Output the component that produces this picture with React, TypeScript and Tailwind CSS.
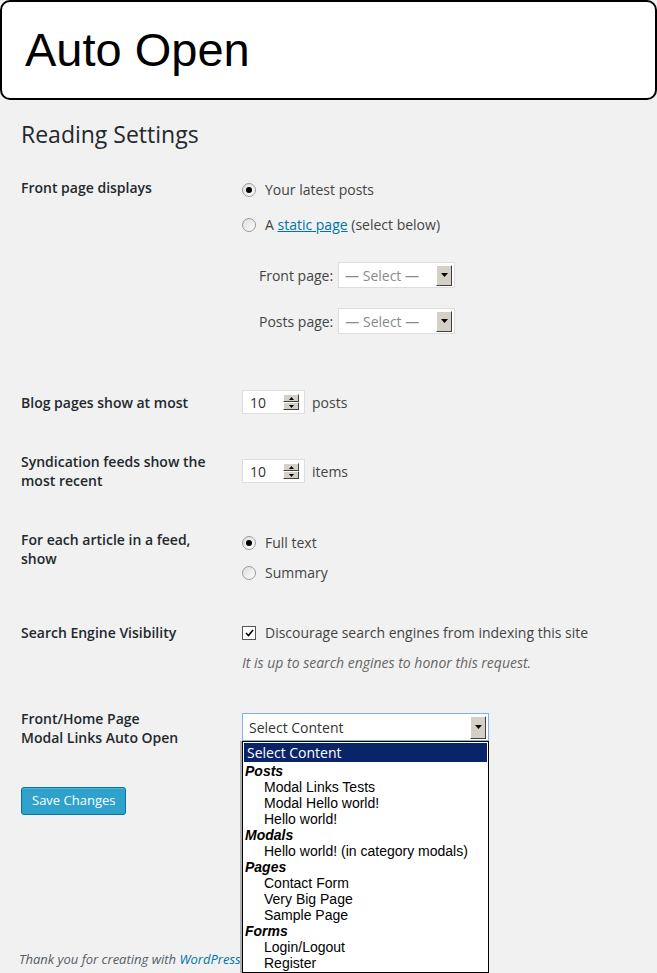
import React from "react";

const wpFont = { fontFamily: '"Open Sans", "Liberation Sans", sans-serif' };

function Radio({ checked }: { checked?: boolean }) {
  return (
    <span className="inline-flex h-[14px] w-[14px] shrink-0 items-center justify-center rounded-full border border-[#9a9a9a] bg-gradient-to-br from-[#dcdcdc] to-white">
      {checked && <span className="h-[6px] w-[6px] rounded-full bg-black" />}
    </span>
  );
}

function DropArrow({ className }: { className?: string }) {
  return (
    <span
      className={
        "flex items-center justify-center border border-t-white border-l-white border-b-[#404040] border-r-[#404040] bg-[#d4d0c8] " +
        (className ?? "")
      }
    >
      <svg width="7" height="4" viewBox="0 0 7 4">
        <path d="M0 0h7L3.5 4z" fill="#000" />
      </svg>
    </span>
  );
}

function SmallSelect() {
  return (
    <div className="flex h-[26px] w-[117px] items-center justify-between border border-[#dddddd] bg-white pl-[6px] pr-[2px]">
      <span className="text-[14px] text-[#8a8a8a]">— Select —</span>
      <DropArrow className="h-[21px] w-[16px]" />
    </div>
  );
}

function Spinner() {
  return (
    <div className="flex h-[24px] w-[63px] items-center justify-between border border-[#dddddd] bg-white pl-[7px] pr-[5px]">
      <span className="text-[14px] text-[#333]">10</span>
      <span className="flex h-[16px] w-[16px] flex-col">
        <span className="flex flex-1 items-center justify-center border border-t-white border-l-white border-b-[#404040] border-r-[#404040] bg-[#d4d0c8]">
          <svg width="5" height="3" viewBox="0 0 5 3">
            <path d="M0 3h5L2.5 0z" fill="#000" />
          </svg>
        </span>
        <span className="flex flex-1 items-center justify-center border border-t-white border-l-white border-b-[#404040] border-r-[#404040] bg-[#d4d0c8]">
          <svg width="5" height="3" viewBox="0 0 5 3">
            <path d="M0 0h5L2.5 3z" fill="#000" />
          </svg>
        </span>
      </span>
    </div>
  );
}

const groups: { name: string; items: string[] }[] = [
  { name: "Posts", items: ["Modal Links Tests", "Modal Hello world!", "Hello world!"] },
  { name: "Modals", items: ["Hello world! (in category modals)"] },
  { name: "Pages", items: ["Contact Form", "Very Big Page", "Sample Page"] },
  { name: "Forms", items: ["Login/Logout", "Register"] },
];

export default function App() {
  return (
    <div className="min-h-[973px] w-full overflow-hidden bg-[#f1f1f1] text-[#444]" style={wpFont}>
      <div className="flex h-[100px] items-center rounded-[10px] border-2 border-black bg-white pl-[23px] pb-[2px]">
        <span className="text-[47px] leading-none text-black" style={{ fontFamily: '"Liberation Sans", Arial, sans-serif' }}>
          Auto Open
        </span>
      </div>

      <div className="pl-[21px]">
        <h1 className="mt-[19px] text-[23px] leading-[30px] text-[#23282d]">Reading Settings</h1>

        {/* Front page displays */}
        <div className="mt-[31px] flex">
          <div className="-mt-[2px] w-[221px] text-[14px] font-semibold leading-[19px] text-[#23282d]">Front page displays</div>
          <div className="flex flex-col text-[14px]">
            <div className="flex h-[19px] items-center gap-[9px]">
              <Radio checked />
              <span>Your latest posts</span>
            </div>
            <div className="mt-[16px] flex h-[19px] items-center gap-[9px]">
              <Radio />
              <span>
                A <span className="text-[#0073aa] underline">static page</span> (select below)
              </span>
            </div>
            <div className="ml-[17px] mt-[28px] flex items-center gap-[5px]">
              <span>Front page:</span>
              <SmallSelect />
            </div>
            <div className="ml-[17px] mt-[20px] flex items-center gap-[5px]">
              <span>Posts page:</span>
              <SmallSelect />
            </div>
          </div>
        </div>

        {/* Blog pages */}
        <div className="mt-[56px] flex items-center">
          <div className="w-[221px] text-[14px] font-semibold leading-[19px] text-[#23282d]">Blog pages show at most</div>
          <Spinner />
          <span className="ml-[7px] text-[14px]">posts</span>
        </div>

        {/* Syndication */}
        <div className="mt-[38px] flex items-start">
          <div className="w-[221px] pr-[10px] text-[14px] font-semibold leading-[19px] text-[#23282d]">
            Syndication feeds show the most recent
          </div>
          <div className="mt-[7px] flex items-center">
            <Spinner />
            <span className="ml-[7px] text-[14px]">items</span>
          </div>
        </div>

        {/* For each article */}
        <div className="mt-[40px] flex items-start">
          <div className="w-[221px] pr-[20px] text-[14px] font-semibold leading-[19px] text-[#23282d]">
            For each article in a feed, show
          </div>
          <div className="mt-[3px] flex flex-col text-[14px]">
            <div className="flex h-[19px] items-center gap-[9px]">
              <Radio checked />
              <span>Full text</span>
            </div>
            <div className="mt-[11px] flex h-[19px] items-center gap-[9px]">
              <Radio />
              <span>Summary</span>
            </div>
          </div>
        </div>

        {/* Search engine */}
        <div className="mt-[41px] flex items-start">
          <div className="w-[221px] text-[14px] font-semibold leading-[19px] text-[#23282d]">Search Engine Visibility</div>
          <div className="flex flex-col text-[14px]">
            <div className="flex h-[19px] items-center gap-[9px]">
              <span className="flex h-[14px] w-[14px] items-center justify-center border border-[#555] bg-white">
                <svg width="9" height="8" viewBox="0 0 9 8">
                  <path d="M1 4l2.5 2.5L8 1" fill="none" stroke="#000" strokeWidth="1.6" />
                </svg>
              </span>
              <span>Discourage search engines from indexing this site</span>
            </div>
            <div className="mt-[11px] text-[14px] italic leading-[19px] text-[#666]">
              It is up to search engines to honor this request.
            </div>
          </div>
        </div>

        {/* Modal links */}
        <div className="mt-[37px] flex items-start">
          <div className="w-[221px] text-[14px] font-semibold leading-[19px] text-[#23282d]">
            Front/Home Page
            <br />
            Modal Links Auto Open
          </div>
          <div className="relative mt-[4px]">
            <div className="flex h-[28px] w-[247px] items-center justify-between border border-[#7eb4ea] bg-white pl-[6px] pr-[2px]">
              <span className="text-[14px] text-[#333]">Select Content</span>
              <DropArrow className="h-[23px] w-[16px]" />
            </div>
            <div className="absolute left-0 top-[28px] z-10 w-[247px] border border-black bg-white pb-[1px] shadow-[-2px_0_0_#b0b0b0]">
              <div className="m-[1px] bg-[#0a246a] px-[3px] text-[14px] leading-[19px] text-white">Select Content</div>
              <div className="text-[14px] leading-[16px] text-black" style={{ fontFamily: '"Liberation Sans", Arial, sans-serif' }}>
                {groups.map((g) => (
                  <div key={g.name}>
                    <div className="pl-[2px] font-bold italic">{g.name}</div>
                    {g.items.map((it) => (
                      <div key={it} className="pl-[21px]">
                        {it}
                      </div>
                    ))}
                  </div>
                ))}
              </div>
            </div>
          </div>
        </div>

        <button className="mt-[40px] h-[28px] rounded-[3px] border border-[#0074a2] bg-[#2ea2cc] px-[10px] text-[13px] text-white shadow-[inset_0_1px_0_rgba(120,200,230,0.5)]">
          Save Changes
        </button>

        <div className="-ml-[2px] mt-[135px] text-[13px] italic leading-[18px] text-[#555d66]">
          Thank you for creating with <span className="text-[#0073aa]">WordPress</span>.
        </div>
      </div>
    </div>
  );
}
